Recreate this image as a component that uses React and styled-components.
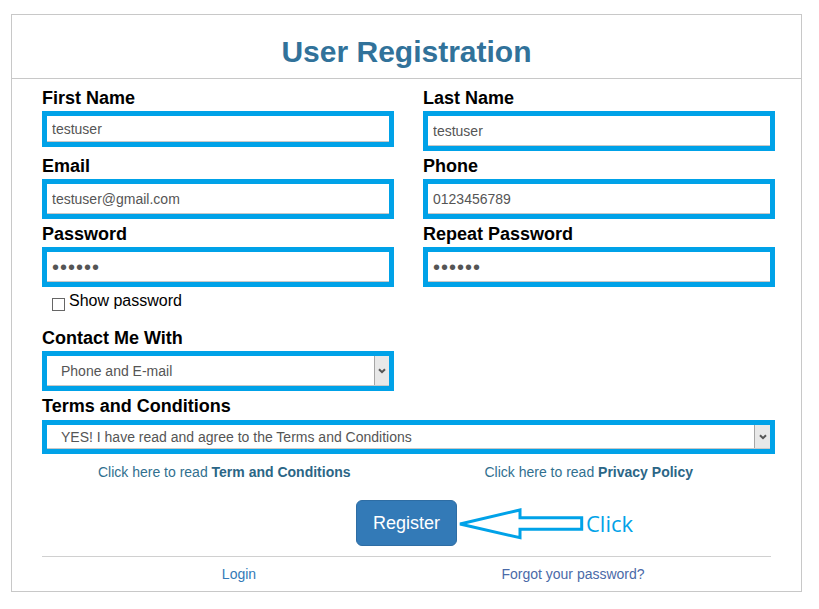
import React from "react";
import styled, { createGlobalStyle } from "styled-components";

const GlobalStyle = createGlobalStyle`
  body {
    margin: 0;
    background: #fff;
    font-family: "Liberation Sans", Arial, sans-serif;
  }
`;

const Page = styled.div`
  padding: 14px 0 0 11px;
`;

const Box = styled.div`
  width: 791px;
  box-sizing: border-box;
  border: 1px solid #c8c8c8;
`;

const Header = styled.div`
  padding: 20px 0 9px;
  border-bottom: 1px solid #c8c8c8;
  text-align: center;
`;

const Title = styled.h2`
  margin: 0;
  font: 700 30px/34px "Liberation Sans", Arial, sans-serif;
  color: #31729a;
`;

const Body = styled.div`
  padding: 9px 26px 7px 30px;
`;

const FieldGrid = styled.div`
  display: grid;
  grid-template-columns: 1fr 1fr;
  column-gap: 29px;
  row-gap: 5px;
  margin-top: ${(p) => p.$top || 0}px;
`;

const Group = styled.div`
  display: flex;
  flex-direction: column;
  margin-top: ${(p) => p.$top || 0}px;
`;

const Label = styled.label`
  font: 700 18px/20px "Liberation Sans", Arial, sans-serif;
  color: #000;
  margin-bottom: ${(p) => p.$gap || 3}px;
`;

const TextInput = styled.input`
  width: 100%;
  height: ${(p) => p.$h || 40}px;
  box-sizing: border-box;
  border: 5px solid #00a2e8;
  padding: 0 5px;
  font: 14px "Liberation Sans", Arial, sans-serif;
  color: #555;
  background: #fff;
  box-shadow: inset 0 -1px 0 #c8c8c8;
  outline: none;

  &[type="password"] {
    font-size: 20px;
    letter-spacing: 1px;
  }
`;

const CheckRow = styled.div`
  display: flex;
  align-items: flex-start;
  margin-top: 4px;
  padding-left: 10px;
  font: 16px/20px "Liberation Sans", Arial, sans-serif;
  color: #000;
`;

const Check = styled.input`
  appearance: none;
  width: 13px;
  height: 13px;
  margin: 7px 4px 0 0;
  box-sizing: border-box;
  border: 1px solid #666;
  background: #fff;
`;

const SelectWrap = styled.div`
  position: relative;
`;

const Select = styled.select`
  appearance: none;
  width: 100%;
  height: ${(p) => p.$h || 40}px;
  box-sizing: border-box;
  border: 5px solid #00a2e8;
  border-radius: 0;
  padding: 0 24px 0 14px;
  font: 14px "Liberation Sans", Arial, sans-serif;
  color: #555;
  background: #fff;
  box-shadow: inset 0 -1px 0 #c8c8c8;
  outline: none;
`;

const ArrowBox = styled.span`
  position: absolute;
  top: 5px;
  right: 5px;
  bottom: 6px;
  width: ${(p) => p.$w || 14}px;
  display: flex;
  align-items: center;
  justify-content: center;
  background: #e8e8e8;
  border-left: 1px solid #a6a6a6;
  pointer-events: none;
`;

const LinksRow = styled.div`
  display: grid;
  grid-template-columns: 1fr 1fr;
  margin-top: 8px;
  padding-right: 4px;
  text-align: center;
  font: 14px/20px "Liberation Sans", Arial, sans-serif;
`;

const InfoLink = styled.a`
  color: #31708f;
  text-decoration: none;

  strong {
    color: #2b6686;
  }
`;

const ButtonRow = styled.div`
  display: flex;
  justify-content: center;
  margin-top: 18px;
  padding-right: 4px;
`;

const ButtonWrap = styled.div`
  position: relative;
`;

const RegisterButton = styled.button`
  display: block;
  padding: 10px 16px;
  font: 18px/24px "Liberation Sans", Arial, sans-serif;
  color: #fff;
  background: #337ab7;
  border: 1px solid #2e6da4;
  border-radius: 6px;
  cursor: pointer;
`;

const ArrowNote = styled.svg`
  position: absolute;
  left: 100%;
  top: 5px;
  overflow: visible;
`;

const ClickNote = styled.span`
  position: absolute;
  left: calc(100% + 129px);
  top: 8px;
  font: 400 22px/30px "Open Sans", sans-serif;
  color: #00a2e8;
  white-space: nowrap;
`;

const Divider = styled.hr`
  height: 1px;
  margin: 10px 4px 0 0;
  border: 0;
  background: #d0d0d0;
`;

const FooterRow = styled.div`
  display: grid;
  grid-template-columns: 1fr 1fr;
  width: 668px;
  margin-left: 30px;
  padding-top: 7px;
  text-align: center;
  font: 14px/20px "Liberation Sans", Arial, sans-serif;
`;

const FooterLink = styled.a`
  color: ${(p) => p.$color || "#337ab7"};
  text-decoration: none;
`;

const Chevron = () => (
  <svg width="8" height="6" viewBox="0 0 8 6">
    <path d="M1 1.2 L4 4.2 L7 1.2" fill="none" stroke="#555" strokeWidth="2" />
  </svg>
);

const Field = ({ label, type = "text", value, h }) => (
  <Group>
    <Label>{label}</Label>
    <TextInput type={type} defaultValue={value} $h={h} />
  </Group>
);

const App = () => (
  <Page>
    <GlobalStyle />
    <Box>
      <Header>
        <Title>User Registration</Title>
      </Header>
      <Body>
        <FieldGrid>
          <Field label="First Name" value="testuser" h={36} />
          <Field label="Last Name" value="testuser" />
          <Field label="Email" value="testuser@gmail.com" />
          <Field label="Phone" value="0123456789" />
          <Group>
            <Label>Password</Label>
            <TextInput type="password" defaultValue="123456" />
            <CheckRow>
              <Check type="checkbox" />
              Show password
            </CheckRow>
          </Group>
          <Field label="Repeat Password" type="password" value="123456" />
        </FieldGrid>

        <FieldGrid $top={17}>
          <Group>
            <Label>Contact Me With</Label>
            <SelectWrap>
              <Select defaultValue="both">
                <option value="both">Phone and E-mail</option>
                <option value="phone">Phone</option>
                <option value="email">E-mail</option>
              </Select>
              <ArrowBox>
                <Chevron />
              </ArrowBox>
            </SelectWrap>
          </Group>
        </FieldGrid>

        <Group $top={5}>
          <Label $gap={4}>Terms and Conditions</Label>
          <SelectWrap>
            <Select $h={34} defaultValue="yes">
              <option value="yes">
                YES! I have read and agree to the Terms and Conditions
              </option>
              <option value="no">No</option>
            </Select>
            <ArrowBox $w={15}>
              <Chevron />
            </ArrowBox>
          </SelectWrap>
        </Group>

        <LinksRow>
          <InfoLink href="#terms">
            Click here to read <strong>Term and Conditions</strong>
          </InfoLink>
          <InfoLink href="#privacy">
            Click here to read <strong>Privacy Policy</strong>
          </InfoLink>
        </LinksRow>

        <ButtonRow>
          <ButtonWrap>
            <RegisterButton type="button">Register</RegisterButton>
            <ArrowNote width="130" height="40" viewBox="0 0 130 40">
              <path
                d="M3 19 L63 5 L63 12.7 L124.7 12.7 L124.7 24.3 L63 24.3 L63 32.7 Z"
                fill="none"
                stroke="#00a2e8"
                strokeWidth="3"
                strokeLinejoin="miter"
              />
            </ArrowNote>
            <ClickNote>Click</ClickNote>
          </ButtonWrap>
        </ButtonRow>

        <Divider />

        <FooterRow>
          <FooterLink href="#login">Login</FooterLink>
          <FooterLink href="#forgot" $color="#4a6aa8">
            Forgot your password?
          </FooterLink>
        </FooterRow>
      </Body>
    </Box>
  </Page>
);

export default App;
